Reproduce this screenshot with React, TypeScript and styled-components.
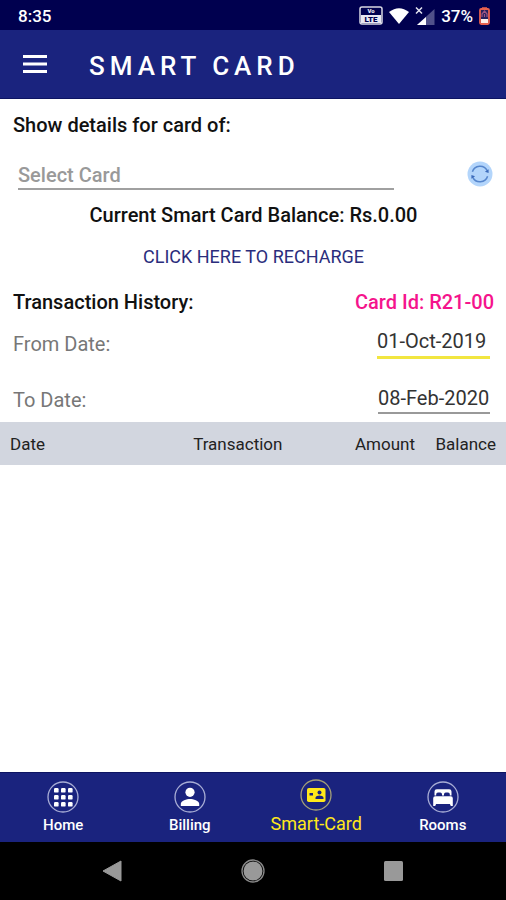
import React from "react";
import styled, { createGlobalStyle, css } from "styled-components";

const GlobalStyle = createGlobalStyle`
  *, *::before, *::after { box-sizing: border-box; }
  body { margin: 0; background: #fff; font-family: Roboto, "Liberation Sans", sans-serif; color: #111; }
  button, input, select { font: inherit; color: inherit; border: 0; padding: 0; margin: 0; background: none; border-radius: 0; }
  button, select { cursor: pointer; }
  svg { display: block; }
`;

const Screen = styled.div`
  display: flex;
  flex-direction: column;
  min-height: 100vh;
`;

const StatusBar = styled.div`
  display: flex;
  align-items: center;
  justify-content: space-between;
  height: 30px;
  padding: 2px 16px 0 18px;
  background: #00004f;
  color: #fff;
  font-size: 17px;
  font-weight: 500;
`;

const StatusIcons = styled.div`
  display: flex;
  align-items: center;
  gap: 6px;
`;

const AppBar = styled.header`
  display: flex;
  align-items: center;
  gap: 40px;
  height: 69px;
  padding: 0 20px;
  background: #1a237e;
  border-bottom: 1px solid #0d1462;
  color: #fff;
`;

const Title = styled.h1`
  margin: 0;
  padding-top: 4px;
  font-size: 26px;
  line-height: 30px;
  font-weight: 500;
  letter-spacing: 5px;
`;

const Main = styled.main`
  flex: 1;
  display: flex;
  flex-direction: column;
`;

const Section = styled.section`
  display: flex;
  flex-direction: column;
  padding: 14px 12px 6px 13px;
  font-size: 20px;
  line-height: 24px;
`;

const StrongLabel = styled.label`
  font-weight: 500;
`;

const Heading = styled.h2`
  margin: 0;
  font-size: 20px;
  font-weight: 500;
  line-height: 24px;
`;

const SelectRow = styled.div`
  display: flex;
  align-items: flex-start;
  justify-content: space-between;
  gap: 73px;
  margin-top: 24px;
  padding: 0 1px 0 5px;
`;

const CardSelect = styled.select`
  appearance: none;
  flex: 1;
  min-width: 0;
  height: 29px;
  border-bottom: 2px solid #a0a0a0;
  color: #999;
  font-weight: 500;
  line-height: 24px;
`;

const RefreshButton = styled.button`
  flex: none;
`;

const Balance = styled.p`
  margin: 13px 0 0;
  font-weight: 500;
  text-align: center;
`;

const Recharge = styled.a`
  align-self: center;
  margin: 18px 0 21px;
  color: #2a2d7c;
  font-size: 18px;
  text-decoration: none;
`;

const Row = styled.div`
  display: flex;
  align-items: center;
  justify-content: space-between;
`;

const CardId = styled.span`
  color: #f5148c;
  font-weight: 500;
`;

const DateRow = styled(Row)`
  height: 32px;
  margin-top: 14px;
  padding-right: 4px;

  & + & { margin-top: 24px; }
`;

const DateLabel = styled.label`
  color: #777;
`;

const DateInput = styled.input<{ $active?: boolean }>`
  width: ${(p) => (p.$active ? "113px" : "112px")};
  height: ${(p) => (p.$active ? "30px" : "28px")};
  padding-bottom: 3px;
  border-bottom: ${(p) => (p.$active ? "3px solid #f2e640" : "2px solid #999")};
  color: #333;
  font-size: 20px;
  outline: none;
`;

const Table = styled.table`
  width: 100%;
  table-layout: fixed;
  border-collapse: collapse;
  background: #d2d6df;
  color: #222;
  font-size: 17px;
`;

const HeadCell = styled.th<{ $width: string; $align?: string }>`
  width: ${(p) => p.$width};
  height: 43px;
  padding: 1px 10px 0;
  font-weight: 400;
  text-align: ${(p) => p.$align ?? "left"};
`;

const TabBar = styled.nav`
  display: flex;
  height: 70px;
  background: #1a237e;
  border-top: 1px solid #0d1462;
`;

const Tab = styled.a<{ $active?: boolean }>`
  flex: 1 1 0;
  display: flex;
  flex-direction: column;
  align-items: center;
  padding-top: 8px;
  gap: 2px;
  color: #fff;
  font-size: 15px;
  line-height: 20px;
  font-weight: 500;
  text-decoration: none;
  ${(p) =>
    p.$active &&
    css`
      padding-top: 6px;
      color: #ffe81a;
      font-size: 18px;
      line-height: 22px;
      font-weight: 400;
    `}
`;

const SystemBar = styled.div`
  display: flex;
  align-items: center;
  justify-content: center;
  gap: 112px;
  height: 58px;
  background: #000;
`;

const VolteIcon = () => (
  <svg width="24" height="20" viewBox="0 0 24 20">
    <rect x="1" y="1" width="22" height="17" rx="2" fill="none" stroke="#d8d8e4" strokeWidth="1.5" />
    <rect x="2" y="9" width="20" height="8" fill="#e8e8f2" />
    <g fontFamily="Roboto, sans-serif" fontWeight="900" textAnchor="middle">
      <text x="12" y="7" fontSize="6" fill="#e8e8f2">Vo</text>
      <text x="12" y="16" fontSize="8" fill="#00004f">LTE</text>
    </g>
  </svg>
);

const WifiIcon = () => (
  <svg width="20" height="16" viewBox="0 0 20 16">
    <path d="M0 4Q10-3.600 20 4L10 16Z" fill="#fff" />
  </svg>
);

const SignalIcon = () => (
  <svg width="20" height="20" viewBox="0 0 20 20">
    <path d="M19.500 3V19H2Z" fill="#50508a" />
    <path d="M11 11V19H2Z" fill="#fff" />
    <path d="M1 1.500l6 6M7 1.500l-6 6" stroke="#e4e4f0" strokeWidth="1.500" />
  </svg>
);

const BatteryIcon = () => (
  <svg width="11" height="18" viewBox="0 0 11 18">
    <path d="M3 1h5" stroke="#e8604e" strokeWidth="1.500" />
    <rect x="1" y="2" width="9" height="15" rx="1.200" fill="#25205e" stroke="#e8604e" strokeWidth="1.800" />
    <rect x="2" y="12" width="7" height="4" fill="#fff0ea" />
    <path d="M3 10V7l2.500-3L8 7v3M5.500 7v3" stroke="#9d5583" strokeWidth="1.200" fill="none" />
  </svg>
);

const MenuIcon = () => (
  <svg width="29" height="20" viewBox="0 0 29 20" fill="#fff">
    <path d="M3 1h24v3H3zM3 8.500h24v3H3zM3 16h24v3H3z" />
  </svg>
);

const RefreshIcon = () => (
  <svg width="26" height="26" viewBox="0 0 26 26">
    <circle cx="13" cy="13" r="12.500" fill="#b3d5fb" />
    <g fill="none" stroke="#5585cc" strokeWidth="1.500">
      <path d="M5.400 10.800A8 8 0 0 1 20.200 9.700" />
      <path d="M20.600 15.200A8 8 0 0 1 5.800 16.300" />
    </g>
    <path d="M21.600 8.200v3.900l-3.700-1.300zM4.400 17.800v-3.900l3.700 1.300z" fill="#3c6bba" />
  </svg>
);

const TabIcon = ({ children, ring = "#a9aed6" }: { children: React.ReactNode; ring?: string }) => (
  <svg width="32" height="32" viewBox="0 0 32 32" fill="currentColor">
    <circle cx="16" cy="16" r="15" fill="none" stroke={ring} strokeWidth="1.300" />
    {children}
  </svg>
);

const GridGlyph = () => (
  <>
    {[7, 14, 21].map((y) =>
      [7, 14, 21].map((x) => <rect key={`${x}-${y}`} x={x} y={y} width="4.600" height="4.600" rx="1.200" />)
    )}
  </>
);

const tabs = [
  { label: "Home", glyph: <GridGlyph /> },
  {
    label: "Billing",
    glyph: (
      <>
        <circle cx="16" cy="11.300" r="4.600" />
        <path d="M6.800 25v-2.200c0-3 6-4.700 9.200-4.700s9.200 1.700 9.200 4.700V25z" />
      </>
    ),
  },
  {
    label: "Smart-Card",
    active: true,
    ring: "#a39f78",
    glyph: (
      <>
        <rect x="7" y="9" width="18.500" height="14" rx="1.800" />
        <g fill="#1a237e">
          <rect x="9.500" y="14" width="3.500" height="2.500" />
          <circle cx="19.500" cy="13.400" r="2" />
          <path d="M15.500 20v-1.200c0-1.500 2.500-2.200 4-2.200s4 .7 4 2.200V20z" />
        </g>
      </>
    ),
  },
  {
    label: "Rooms",
    glyph: (
      <>
        <path d="M7.500 14.500V10.500a2.300 2.300 0 0 1 2.300-2.300h12.400a2.300 2.300 0 0 1 2.300 2.300v4h-1.700v-1.300a1.800 1.800 0 0 0-1.800-1.800h-2.200a1.800 1.800 0 0 0-1.800 1.800v1.300h-2v-1.300a1.800 1.800 0 0 0-1.800-1.800H11a1.800 1.800 0 0 0-1.800 1.800v1.300z" />
        <path d="M8.200 15.300h15.600a2 2 0 0 1 2 2V25h-2l-.9-2H9.100l-.9 2h-2v-7.700a2 2 0 0 1 2-2z" />
      </>
    ),
  },
];

export default function App() {
  return (
    <Screen>
      <GlobalStyle />
      <StatusBar>
        <span>8:35</span>
        <StatusIcons>
          <VolteIcon />
          <WifiIcon />
          <SignalIcon />
          <span>37%</span>
          <BatteryIcon />
        </StatusIcons>
      </StatusBar>
      <AppBar>
        <button type="button" aria-label="Menu">
          <MenuIcon />
        </button>
        <Title>SMART CARD</Title>
      </AppBar>
      <Main>
        <Section>
          <StrongLabel htmlFor="card">Show details for card of:</StrongLabel>
          <SelectRow>
            <CardSelect id="card" defaultValue="">
              <option value="">Select Card</option>
            </CardSelect>
            <RefreshButton type="button" aria-label="Refresh">
              <RefreshIcon />
            </RefreshButton>
          </SelectRow>
          <Balance>Current Smart Card Balance: Rs.0.00</Balance>
          <Recharge href="#recharge">CLICK HERE TO RECHARGE</Recharge>
          <Row>
            <Heading>Transaction History:</Heading>
            <CardId>Card Id: R21-00</CardId>
          </Row>
          <DateRow>
            <DateLabel htmlFor="from">From Date:</DateLabel>
            <DateInput id="from" $active defaultValue="01-Oct-2019" />
          </DateRow>
          <DateRow>
            <DateLabel htmlFor="to">To Date:</DateLabel>
            <DateInput id="to" defaultValue="08-Feb-2020" />
          </DateRow>
        </Section>
        <Table>
          <thead>
            <tr>
              <HeadCell scope="col" $width="29%">Date</HeadCell>
              <HeadCell scope="col" $width="36%" $align="center">Transaction</HeadCell>
              <HeadCell scope="col" $width="19%" $align="right">Amount</HeadCell>
              <HeadCell scope="col" $width="16%" $align="right">Balance</HeadCell>
            </tr>
          </thead>
        </Table>
      </Main>
      <TabBar>
        {tabs.map((t) => (
          <Tab key={t.label} href="#" $active={t.active} aria-current={t.active ? "page" : undefined}>
            <TabIcon ring={t.ring}>{t.glyph}</TabIcon>
            {t.label}
          </Tab>
        ))}
      </TabBar>
      <SystemBar>
        <button type="button" aria-label="Back">
          <svg width="28" height="26" viewBox="0 0 28 26">
            <path d="M4 13L22 3V23Z" fill="#999" stroke="#999" strokeLinejoin="round" />
          </svg>
        </button>
        <button type="button" aria-label="Home screen">
          <svg width="28" height="28" viewBox="0 0 28 28">
            <circle cx="14" cy="14" r="11" fill="none" stroke="#8a8a8a" strokeWidth="1.300" />
            <circle cx="14" cy="14" r="9.500" fill="#999" />
          </svg>
        </button>
        <button type="button" aria-label="Recent apps">
          <svg width="28" height="26" viewBox="0 0 28 26">
            <rect x="5" y="3" width="19" height="20" rx="1.500" fill="#999" />
          </svg>
        </button>
      </SystemBar>
    </Screen>
  );
}
